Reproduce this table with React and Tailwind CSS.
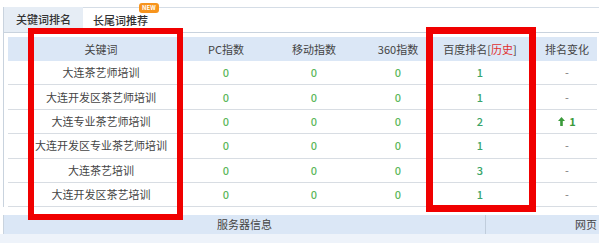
import React from 'react';

const rows = [
  { kw: '大连茶艺师培训', pc: 0, mb: 0, s360: 0, bd: 1, ch: '-' },
  { kw: '大连开发区茶艺师培训', pc: 0, mb: 0, s360: 0, bd: 1, ch: '-' },
  { kw: '大连专业茶艺师培训', pc: 0, mb: 0, s360: 0, bd: 2, ch: 'up' },
  { kw: '大连开发区专业茶艺师培训', pc: 0, mb: 0, s360: 0, bd: 1, ch: '-' },
  { kw: '大连茶艺培训', pc: 0, mb: 0, s360: 0, bd: 3, ch: '-' },
  { kw: '大连开发区茶艺培训', pc: 0, mb: 0, s360: 0, bd: 1, ch: '-' },
];

const cols = 'grid grid-cols-[186px_64px_112px_56px_108px_66px]';

export default function App() {
  return (
    <div className="relative w-[599px] h-[243px] overflow-hidden bg-white text-[11px] leading-none text-[#444] font-['Noto_Sans_CJK_SC','Noto_Sans',sans-serif]">
      <div className="ml-[3px] mt-[7px] w-[598px] border-l border-r border-[#c9d3de]">
        {/* tabs */}
        <div className="flex h-[26px] border-b border-[#c9d3de]">
          <div className="w-[79px] bg-[#e6edf5] flex items-center justify-center font-medium text-[#333]">关键词排名</div>
          <div className="flex-1 border-t border-[#d5dde6] flex items-center">
            <span className="relative ml-[10px] font-medium text-[#333]">
              长尾词推荐
              <span className="absolute left-[46px] top-[-12px] h-[10px] px-[3px] rounded-[3px] bg-[#f7941d] text-white text-[6px] leading-[10px] font-bold">NEW</span>
            </span>
          </div>
        </div>
        {/* table */}
        <div className="mt-[4px] ml-[4px] mr-[3px]">
          <div className={`${cols} h-[24px] bg-[#dbe7f6] items-center text-center text-[#444]`}>
            <div>关键词</div>
            <div>PC指数</div>
            <div>移动指数</div>
            <div>360指数</div>
            <div>百度排名[<span className="text-[#e03030]">历史</span>]</div>
            <div>排名变化</div>
          </div>
          {rows.map((r, i) => (
            <div key={i} className={`${cols} h-[24.4px] items-center text-center border-b border-[#d8dde3]`}>
              <div className="text-[#444]">{r.kw}</div>
              <div className="text-[#5cb85c] font-medium">{r.pc}</div>
              <div className="text-[#5cb85c] font-medium">{r.mb}</div>
              <div className="text-[#5cb85c] font-medium">{r.s360}</div>
              <div className="text-[#3aa56a] font-medium">{r.bd}</div>
              <div className="text-[#777]">
                {r.ch === 'up' ? (
                  <span className="inline-flex items-center gap-[4px] text-[#3a9a3a] font-semibold">
                    <svg width="7" height="9" viewBox="0 0 7 9"><path d="M3.5 0 L7 4 L4.8 4 L4.8 9 L2.2 9 L2.2 4 L0 4 Z" fill="#3a9a3a" /></svg>
                    1
                  </span>
                ) : '-'}
              </div>
            </div>
          ))}
        </div>
      </div>
      {/* footer */}
      <div className="ml-[3px] mt-[8px] w-[598px] h-[19px] bg-[#dbe7f6] border-l border-[#c9d3de] flex items-center text-[#444]">
        <div className="w-[482px] h-full flex items-center justify-center border-r border-[#c0cddc]">服务器信息</div>
        <div className="flex-1 text-right pr-[4px]">网页</div>
      </div>
      <div className="h-[20px] bg-[#eef3fa]" />
      {/* annotation boxes */}
      <div className="absolute left-[28px] top-[28px] w-[155px] h-[192px] border-[6px] border-[#f00000]" />
      <div className="absolute left-[426px] top-[27px] w-[110px] h-[185px] border-[7px] border-[#f00000]" />
    </div>
  );
}
